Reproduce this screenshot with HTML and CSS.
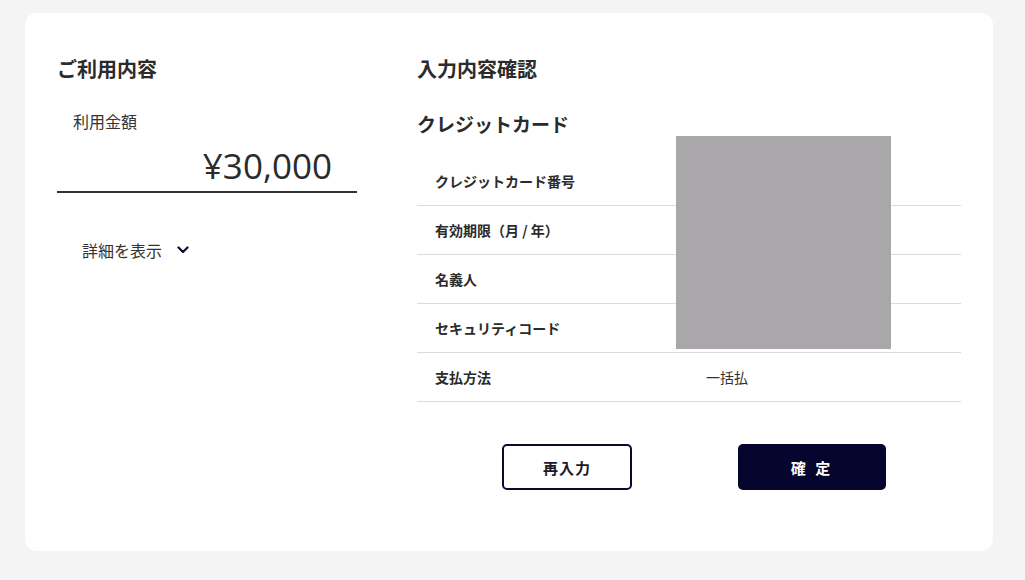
FILE: index.html
```html
<!DOCTYPE html>
<html lang="ja">
<head>
<meta charset="utf-8">
<title>入力内容確認</title>
<link rel="stylesheet" href="styles.css">
</head>
<body>
<main class="card">
  <section class="usage">
    <h2 class="heading">ご利用内容</h2>
    <div class="amount-label">利用金額</div>
    <div class="amount">¥30,000</div>
    <button class="details" type="button">
      <span>詳細を表示</span>
      <svg class="chev" width="12" height="8" viewBox="0 0 12 8"><path d="M1.5 1.5 L6 6 L10.5 1.5" fill="none" stroke="#0b0b2a" stroke-width="2.2" stroke-linecap="round" stroke-linejoin="round"/></svg>
    </button>
  </section>
  <section class="confirm">
    <h2 class="heading">入力内容確認</h2>
    <h3 class="subheading">クレジットカード</h3>
    <div class="table">
      <div class="row"><div class="label">クレジットカード番号</div><div class="value"></div></div>
      <div class="row"><div class="label">有効期限（月 / 年）</div><div class="value"></div></div>
      <div class="row"><div class="label">名義人</div><div class="value"></div></div>
      <div class="row"><div class="label">セキュリティコード</div><div class="value"></div></div>
      <div class="row"><div class="label">支払方法</div><div class="value">一括払</div></div>
    </div>
    <div class="mask"></div>
    <div class="actions">
      <button class="btn btn-outline" type="button">再入力</button>
      <button class="btn btn-primary" type="button">確 定</button>
    </div>
  </section>
</main>
</body>
</html>
```

FILE: styles.css
```css
* { box-sizing: border-box; }
html, body { margin: 0; }
body {
  background: #f4f4f4;
  padding: 13px 32px 0 25px;
  font-family: "Noto Sans CJK JP", "Noto Sans", sans-serif;
  color: #2b2b2b;
}
.card {
  width: 968px;
  height: 538px;
  background: #fff;
  border-radius: 12px;
  padding: 42px 32px 0 32px;
  display: flex;
  gap: 60px;
}
.usage { width: 300px; flex: none; }
.confirm { flex: 1; position: relative; }
.heading {
  margin: 0;
  font-size: 20px;
  line-height: 28px;
  font-weight: 700;
  color: #2b2b2b;
}
.amount-label {
  margin-top: 27px;
  padding-left: 16px;
  font-size: 16px;
  line-height: 22px;
  color: #333;
}
.amount {
  margin-top: 12px;
  padding-right: 25px;
  padding-bottom: 3px;
  text-align: right;
  font-family: "Open Sans", "Noto Sans", sans-serif;
  font-size: 35px;
  font-weight: 500;
  line-height: 44px;
  color: #2b2b2b;
  border-bottom: 2px solid #333;
}
.details {
  margin-top: 46px;
  padding: 0 0 0 25px;
  border: 0;
  background: none;
  display: flex;
  align-items: center;
  gap: 15px;
  font-family: inherit;
  font-size: 16px;
  line-height: 22px;
  color: #333;
  cursor: pointer;
}
.chev { display: block; }
.subheading {
  margin: 27px 0 0 0;
  font-size: 19px;
  line-height: 28px;
  font-weight: 700;
  color: #2b2b2b;
}
.table { margin-top: 19px; }
.row {
  display: flex;
  align-items: center;
  height: 49px;
  border-bottom: 1px solid #dcdcdc;
}
.label {
  width: 289px;
  padding-left: 18px;
  font-size: 14px;
  font-weight: 700;
  color: #2b2b2b;
}
.value {
  font-size: 14px;
  color: #333;
}
.mask {
  position: absolute;
  left: 259px;
  top: 81px;
  width: 215px;
  height: 213px;
  background: #a9a7aa;
}
.actions {
  margin-top: 42px;
  padding-left: 85px;
  display: flex;
  gap: 106px;
}
.btn {
  height: 46px;
  border-radius: 5px;
  font-family: inherit;
  font-size: 15px;
  font-weight: 700;
  cursor: pointer;
}
.btn-outline {
  width: 130px;
  background: #fff;
  border: 2px solid #0a0a2c;
  color: #1a1a2a;
  letter-spacing: 1px;
}
.btn-primary {
  width: 148px;
  background: #05052e;
  border: 0;
  color: #fff;
  letter-spacing: 3px;
}
```
